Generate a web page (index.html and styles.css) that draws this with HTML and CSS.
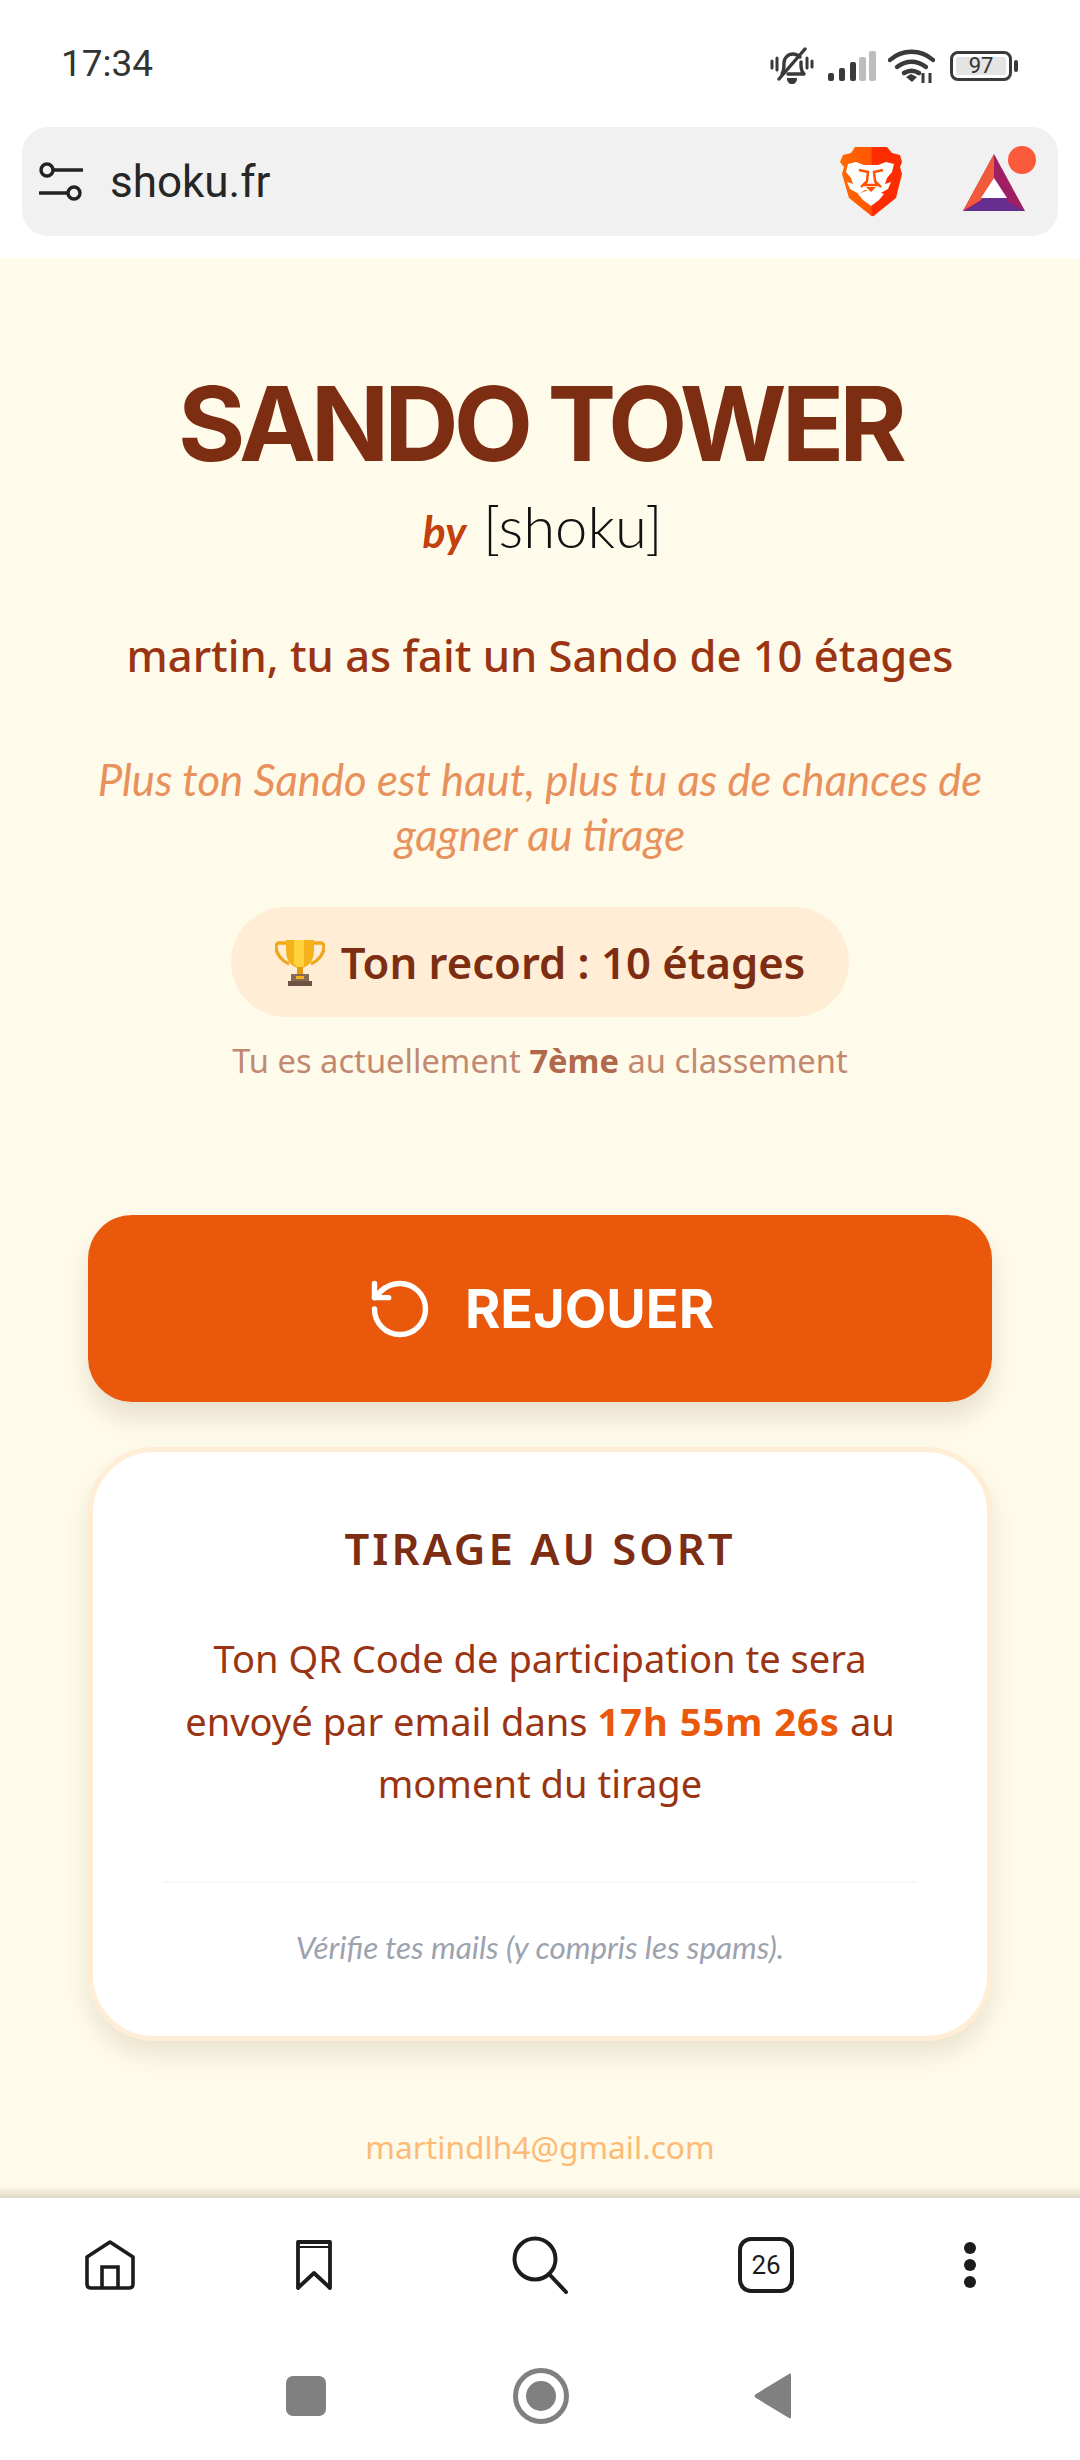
FILE: index.html
```html
<!DOCTYPE html>
<html lang="fr">
<head>
<meta charset="utf-8">
<title>Sando Tower</title>
<link rel="stylesheet" href="styles.css">
</head>
<body>
<div class="phone">
  <header class="status">
    <span class="time">17:34</span>
    <div class="status-icons">
      <svg class="ic-bell" viewBox="0 0 44 38"><g fill="none" stroke="#3a3a3a" stroke-width="3.4" stroke-linecap="round" stroke-linejoin="round"><path d="M12 27c2-3 2-6 2-11 0-5 4-9 9-9 3 0 5 1 7 3M31 15v3c0 4 1 7 3 9H18"/><path d="M35 2 9 32"/><path d="M2 14v7M7 11v12M37 11v10M42 14v6" stroke-width="3"/></g><path d="M17 31h10c0 4-2 6-5 6s-5-2-5-6z" fill="#3a3a3a"/></svg>
      <svg class="ic-signal" viewBox="0 0 48 30"><rect x="0" y="22" width="6" height="8" rx="2" fill="#3a3a3a"/><rect x="11" y="17" width="6" height="13" rx="2" fill="#3a3a3a"/><rect x="22" y="11" width="6" height="19" rx="2" fill="#3a3a3a"/><rect x="31" y="6" width="7" height="24" rx="2" fill="#bdbdbd"/><rect x="41" y="0" width="7" height="30" rx="2" fill="#bdbdbd"/></svg>
      <svg class="ic-wifi" viewBox="0 0 47 36"><g fill="none" stroke="#3a3a3a" stroke-width="4.4" stroke-linecap="round"><path d="M2 12C14 1 33 1 45 12"/><path d="M9 19c9-7 20-7 29 0"/><path d="M16 25c5-3 10-3 15 0"/></g><path d="M18 29l5-3 6 3-5 5z" fill="#3a3a3a"/><path d="M35 25v10M42 25v10" stroke="#3a3a3a" stroke-width="3"/></svg>
      <div class="battery"><div class="batt-body"><span class="batt-level">97</span></div><span class="batt-nub"></span></div>
    </div>
  </header>

  <div class="urlbar">
    <svg class="ic-filter" viewBox="0 0 44 40"><g fill="none" stroke="#222" stroke-width="3.4" stroke-linecap="round"><circle cx="8" cy="8" r="6"/><path d="M15 8h28"/><circle cx="35" cy="31" r="6"/><path d="M1 31h27"/></g></svg>
    <span class="url">shoku.fr</span>
    <svg class="ic-brave" viewBox="0 0 62 70">
      <defs><linearGradient id="bg" x1="0" x2="1"><stop offset="0" stop-color="#ff6a00"/><stop offset="0.5" stop-color="#ff5500"/><stop offset="0.52" stop-color="#ff2a00"/><stop offset="1" stop-color="#fb2f00"/></linearGradient></defs>
      <path d="M15 0h32l5 6 8 2 2 7-2 5 2 7-6 24-20 16c-3 3-4 3-7 0L9 51 2 27l2-7-4-5 3-7 8-2z" fill="url(#bg)"/>
      <path d="M8 17l8-2 8 3h14l8-3 8 2-2 8-5 6-2 6 6-2-3 7-9 5-6-4h-8l-6 4-9-5-3-7 6 2-2-6-5-6z" fill="#fff"/>
      <path d="M19 23l9 2-1 9-6 6M43 23l-9 2 1 9 6 6M27 34l-2 4h12l-2-4" fill="none" stroke="#ff5000" stroke-width="2.4"/>
      <path d="M18 47l13-5 13 5-5 6-8 6-8-6z" fill="#fff"/>
      <path d="M26 40h10l-5 5z" fill="#ff5000"/>
    </svg>
    <svg class="ic-bat" viewBox="0 0 74 66">
      <path d="M31 8 0 65h62z" fill="#9e1f63"/>
      <path d="M31 8 0 65l31-19z" fill="#f15a3a"/>
      <path d="M31 32 17 56 0 65h62L45 56z" fill="#662d91"/>
      <path d="M31 32 18 52h26z" fill="#fff"/>
      <circle cx="59" cy="14" r="14" fill="#fb5a3b"/>
    </svg>
  </div>

  <main class="game">
    <h1 class="title">SANDO TOWER</h1>
    <p class="byline"><em class="by">by</em> <span class="brand">[shoku]</span></p>
    <p class="score">martin, tu as fait un Sando de 10 étages</p>
    <p class="hint">Plus ton Sando est haut, plus tu as de chances de<br>gagner au tirage</p>
    <div class="record">
      <svg class="trophy" viewBox="0 0 50 50">
        <path d="M12 6H4c-2 0-3 2-3 4 0 7 6 14 13 17M38 6h8c2 0 3 2 3 4 0 7-6 14-13 17" fill="none" stroke="#f2a81d" stroke-width="3.4"/>
        <path d="M11 3h28v11c0 11-7 17-14 17S11 25 11 14z" fill="#f5b21b"/>
        <path d="M19 3h10v26c-3 2-6 2-10-2z" fill="#ffd23e"/>
        <rect x="22" y="30" width="6" height="9" fill="#e59a12"/>
        <rect x="16" y="37" width="18" height="8" fill="#8a6a55"/>
        <rect x="13" y="44" width="24" height="5" fill="#6d5245"/>
        <rect x="21" y="39" width="8" height="3" fill="#f5b21b"/>
      </svg>
      <span>Ton record : 10 étages</span>
    </div>
    <p class="rank">Tu es actuellement <strong>7ème</strong> au classement</p>

    <button class="replay" type="button">
      <svg class="ic-replay" viewBox="0 0 24 24"><path d="M3 12a9 9 0 1 0 9-9 9.75 9.75 0 0 0-6.74 2.74L3 8" fill="none" stroke="#fff" stroke-width="1.9" stroke-linecap="round" stroke-linejoin="round"/><path d="M3 3v5h5" fill="none" stroke="#fff" stroke-width="1.9" stroke-linecap="round" stroke-linejoin="round"/></svg>
      <span>REJOUER</span>
    </button>

    <section class="card">
      <h2 class="card-title">TIRAGE AU SORT</h2>
      <p class="card-text">Ton QR Code de participation te sera<br>envoyé par email dans <strong>17h 55m 26s</strong> au<br>moment du tirage</p>
      <hr class="divider">
      <p class="note">Vérifie tes mails (y compris les spams).</p>
    </section>

    <p class="email">martindlh4@gmail.com</p>
  </main>

  <nav class="toolbar">
    <svg class="ic-home" viewBox="0 0 50 50"><path d="M25 2 2 17v27c0 2 1 4 4 4h38c3 0 4-2 4-4V17z" fill="none" stroke="#1c1c1c" stroke-width="3.6" stroke-linejoin="round"/><path d="M17 47V27h16v20" fill="none" stroke="#1c1c1c" stroke-width="3.6"/></svg>
    <svg class="ic-mark" viewBox="0 0 36 50"><path d="M2 2h32v46L18 33 2 48z" fill="none" stroke="#1c1c1c" stroke-width="3.8" stroke-linejoin="round"/><path d="M2 7h32" stroke="#1c1c1c" stroke-width="2"/></svg>
    <svg class="ic-search" viewBox="0 0 56 58"><circle cx="23" cy="23" r="20.5" fill="none" stroke="#1c1c1c" stroke-width="4"/><path d="M37 38l17 18" stroke="#1c1c1c" stroke-width="4" stroke-linecap="round"/></svg>
    <div class="tabs">26</div>
    <div class="dots"><span></span><span></span><span></span></div>
  </nav>

  <nav class="sysnav">
    <span class="sys-square"></span>
    <span class="sys-home"><span></span></span>
    <svg class="sys-back" viewBox="0 0 37 46"><path d="M35 1 2 21c-2 1-2 3 0 4l33 20c1 1 2 0 2-1V2c0-1-1-2-2-1z" fill="#808080"/></svg>
  </nav>
</div>
</body>
</html>
```

FILE: styles.css
```css
* { box-sizing: border-box; }
html, body { margin: 0; padding: 0; background: #fff; }
body { font-family: "Lato", "Liberation Sans", sans-serif; }
p, h1, h2 { margin: 0; }

.phone { width: 1080px; height: 2460px; display: flex; flex-direction: column; overflow: hidden; }

/* status bar */
.status { height: 127px; display: flex; justify-content: space-between; align-items: flex-start; padding: 47px 62px 0 61px; }
.time { font: 400 37px/34px "Roboto", sans-serif; color: #333; }
.status-icons { display: flex; align-items: center; }
.ic-bell { width: 44px; height: 38px; margin-right: 14px; }
.ic-signal { width: 48px; height: 30px; margin-right: 12px; }
.ic-wifi { width: 47px; height: 36px; margin-right: 15px; }
.battery { display: flex; align-items: center; }
.batt-body { width: 62px; height: 30px; border: 3px solid #3a3a3a; border-radius: 8px; padding: 3px; display: flex; }
.batt-level { flex: 1; background: #e4e4e4; border-radius: 2px; font: 400 22px/18px "Roboto", sans-serif; color: #333; text-align: center; }
.batt-nub { width: 4px; height: 12px; background: #3a3a3a; border-radius: 2px; margin-left: 2px; }

/* url bar */
.urlbar { height: 109px; margin: 0 22px; background: #f1f1f1; border-radius: 26px; display: flex; align-items: center; padding: 0 21px 0 17px; }
.ic-filter { width: 44px; height: 40px; }
.url { font: 400 44px/50px "Roboto", sans-serif; color: #262626; margin-left: 27px; flex: 1; }
.ic-brave { width: 62px; height: 70px; margin-right: 61px; margin-left: -1px; }
.ic-bat { width: 74px; height: 66px; margin-top: -6px; }

/* game area */
.game { margin-top: 22px; flex: 1; background: #fffbeb; padding: 111px 88px 0; text-align: center; }
.title { font: 700 103px/110px "Inter", sans-serif; color: #7c2d12; letter-spacing: -5px; }
.byline { margin-top: 17px; padding-left: 5px; line-height: 60px; font-size: 50px; }
.by { font: italic 700 43px/60px "Lato", sans-serif; color: #c2410c; margin-right: 4px; }
.brand { font: 300 58px/60px "Lato", sans-serif; color: #111; }
.score { margin-top: 63px; font: 500 43.5px/60px "Noto Sans", sans-serif; color: #9a3412; white-space: nowrap; }
.hint { margin: 67px -20px 0; font: italic 400 43.7px/55px "Lato", sans-serif; color: #e8915c; white-space: nowrap; }
.record { margin: 45px auto 0; width: 618px; height: 110px; border-radius: 55px; background: #ffedd5; display: flex; align-items: center; justify-content: center; gap: 16px; font: 600 43.6px/60px "Noto Sans", sans-serif; color: #7c2d12; white-space: nowrap; }
.trophy { width: 50px; height: 50px; }
.rank { margin-top: 22px; font: 400 32.7px/44px "Noto Sans", sans-serif; color: #c2896f; white-space: nowrap; }
.rank strong { color: #b0694a; font-weight: 700; }

.replay { display: flex; margin-top: 132px; width: 904px; height: 187px; align-items: center; justify-content: center; gap: 31px; border: 0; border-radius: 44px; background: #ea580c; color: #fff; font: 700 54px/60px "Inter", sans-serif; box-shadow: 0 16px 26px rgba(90, 60, 20, 0.14); }
.ic-replay { width: 68px; height: 68px; }

.card { margin-top: 45px; height: 594px; background: #fff; border: 5px solid #ffedd5; border-radius: 66px; padding: 66px 70px 0; box-shadow: 0 14px 24px rgba(90, 60, 20, 0.12); }
.card-title { font: 600 43.6px/60px "Noto Sans", sans-serif; color: #7c2d12; letter-spacing: 3px; }
.card-text { margin-top: 49px; font: 400 38.1px/62.5px "Noto Sans", sans-serif; color: #9a3412; white-space: nowrap; }
.card-text strong { color: #ea580c; font-weight: 700; letter-spacing: 1px; }
.divider { margin: 66px 0 0; border: 0; height: 2px; background: #f7f7f5; }
.note { margin-top: 44px; font: italic 400 31.4px/40px "Lato", sans-serif; color: #9ca3af; }

.email { margin-top: 84px; font: 400 31.7px/44px "Noto Sans", sans-serif; color: #fdba74; }

/* browser toolbar */
.toolbar { position: relative; height: 134px; flex: none; background: #fff; display: grid; grid-template-columns: 204px 204px 248px 204px 204px; justify-items: center; align-items: center; padding: 0 8px; }
.toolbar::before { content: ""; position: absolute; left: 0; right: 0; top: -12px; height: 12px; background: linear-gradient(rgba(90, 80, 50, 0), rgba(90, 80, 50, 0.2)); }
.ic-home { width: 50px; height: 50px; }
.ic-mark { width: 36px; height: 50px; }
.ic-search { width: 56px; height: 58px; }
.tabs { width: 56px; height: 56px; border: 4px solid #1c1c1c; border-radius: 13px; font: 400 26px/48px "Roboto", sans-serif; color: #1c1c1c; text-align: center; }
.dots { display: flex; flex-direction: column; gap: 5px; }
.dots span { width: 12px; height: 12px; border-radius: 50%; background: #1c1c1c; }

/* system nav */
.sysnav { height: 128px; flex: none; background: #fff; display: flex; justify-content: center; align-items: center; gap: 115px; }
.sys-square { width: 40px; height: 40px; margin: 0 40px; border-radius: 7px; background: #808080; }
.sys-home { width: 56px; height: 56px; margin: 0 32px; border: 5px solid #808080; border-radius: 50%; display: flex; align-items: center; justify-content: center; }
.sys-home span { width: 30px; height: 30px; border-radius: 50%; background: #808080; }
.sys-back { width: 37px; height: 46px; margin: 0 44px 0 38px; }
```
